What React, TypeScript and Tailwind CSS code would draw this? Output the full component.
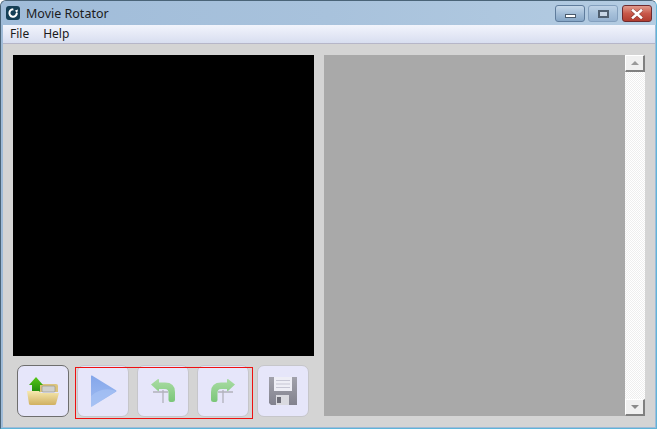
const ToolButton = ({ active, children }: { active?: boolean; children: React.ReactNode }) => (
  <div
    className={`w-[52px] h-[52px] shrink-0 rounded-[7px] bg-[#e6e6fa] flex items-center justify-center border ${
      active ? 'border-[#6e6e6e]' : 'border-[#c6c6ca]'
    }`}
  >
    {children}
  </div>
);

const AppLogo = () => (
  <svg width="14" height="14" viewBox="0 0 14 14">
    <rect width="14" height="14" rx="3" fill="#153f56" />
    <path d="M8.5 3.6 A3.7 3.7 0 1 0 10.8 7" stroke="#ffffff" strokeWidth="2" fill="none" />
    <path d="M7 1.5 L11.5 3 L8 6.5 Z" fill="#153f56" />
    <path d="M9 4.5 L12 3.5 L11 7.5 Z" fill="#ffffff" />
  </svg>
);

const OpenIcon = () => (
  <svg width="34" height="30" viewBox="0 0 34 30">
    <defs>
      <linearGradient id="folder" x1="0" y1="0" x2="0" y2="1">
        <stop offset="0" stopColor="#f6e9b0" />
        <stop offset="1" stopColor="#d0b060" />
      </linearGradient>
      <linearGradient id="arrow" x1="0" y1="0" x2="0" y2="1">
        <stop offset="0" stopColor="#58c818" />
        <stop offset="1" stopColor="#1f8c0c" />
      </linearGradient>
    </defs>
    <path d="M14 16 V9 Q14 8 15 8 H30 Q32 8 32 10 V16 Z" fill="#dcc47c" />
    <rect x="16" y="10" width="13" height="6" rx="1" fill="#d0d0cc" stroke="#8e8e86" strokeWidth="0.6" />
    <path d="M6 9 H3 L10 1 L17 9 H14 V16 H6 Z" fill="url(#arrow)" />
    <path d="M1 15 H13 L15 17 H33 L30 28 Q30 29 28 29 H5 Q3 29 3 28 Z" fill="url(#folder)" />
  </svg>
);

const PlayIcon = () => (
  <svg width="27" height="32" viewBox="0 0 27 32">
    <defs>
      <linearGradient id="play" x1="0" y1="0" x2="0" y2="1">
        <stop offset="0" stopColor="#84a6ea" />
        <stop offset="1" stopColor="#a0bcf2" />
      </linearGradient>
    </defs>
    <path d="M1 1 Q1 0 2 0.6 L26 15.2 Q27 16 26 16.8 L2 31.4 Q1 32 1 31 Z" fill="url(#play)" />
    <path d="M1 21 Q12 11 26.5 16 L2 31.4 Q1 32 1 31 Z" fill="#aac4f5" opacity="0.6" />
  </svg>
);

const TurnIcon = ({ flip }: { flip?: boolean }) => (
  <svg width="26" height="27" viewBox="0 0 26 27" className={flip ? '-scale-x-100' : ''}>
    <defs>
      <linearGradient id="turn" x1="0" y1="0" x2="0" y2="1">
        <stop offset="0" stopColor="#aadcA4" />
        <stop offset="1" stopColor="#7ac678" />
      </linearGradient>
    </defs>
    <path d="M13 12 V25 M3 14 H18" stroke="#b2b2bc" strokeWidth="1.3" fill="none" />
    <path
      d="M1 6.5 L8 1 Q9 0.5 9 2 V4.5 H15 Q25 4.5 25 14 V22 Q25 24 22.5 24 H20.5 Q18.5 24 18.5 22 V15 Q18.5 11 15 11 H9 V12 Q9 13.5 8 13 Z"
      fill="url(#turn)"
    />
  </svg>
);

const SaveIcon = () => (
  <svg width="28" height="28" viewBox="0 0 28 28">
    <defs>
      <linearGradient id="disk" x1="0" y1="0" x2="0" y2="1">
        <stop offset="0" stopColor="#a2a2ac" />
        <stop offset="1" stopColor="#82828e" />
      </linearGradient>
    </defs>
    <path d="M0 0H28V28H2L0 26Z" fill="url(#disk)" />
    <rect x="5" y="0" width="18" height="14" fill="#eeeef6" />
    <path d="M7 3.5H21M7 7H21M7 10.5H21" stroke="#c6c6d4" strokeWidth="1" />
    <rect x="7" y="18" width="13" height="10" fill="#dadae0" />
    <rect x="8" y="20" width="4" height="6" fill="#6e6e78" />
  </svg>
);

export default function App() {
  return (
    <div className="w-[657px] h-[429px] flex flex-col overflow-hidden bg-[#9fbbd8] border border-[#4a6478] border-b-[#5fb4d8] border-r-[#5fb4d8] rounded-t-[6px] font-['Noto_Sans','Open_Sans',sans-serif]">
      {/* title bar */}
      <div className="h-[24px] shrink-0 flex items-start bg-gradient-to-r from-[#a0bcd9] via-[#a8c2dc] to-[#b4cce2]">
        <div className="ml-[5px] mt-[5px]">
          <AppLogo />
        </div>
        <span className="ml-[6px] mt-[5px] text-[12.5px] leading-[16px] text-[#1c1c1c]">Movie Rotator</span>
        <div className="ml-auto mr-[4px] mt-[4px] flex">
          <div className="w-[30px] h-[17px] rounded-[3px] border border-[#5f7c9c] bg-gradient-to-b from-[#c6d8ea] via-[#a4bed8] to-[#86a6c6] flex items-center justify-center">
            <div className="w-[11px] h-[4px] mt-[5px] bg-white border border-[#4a5a6c]" />
          </div>
          <div className="ml-[3px] w-[30px] h-[17px] rounded-[3px] border border-[#84a0be] bg-gradient-to-b from-[#bed2e6] via-[#a6c0da] to-[#96b2d0] flex items-center justify-center">
            <div className="w-[11px] h-[8px] bg-[#c8d6e6] border-2 border-[#4f5f70]" />
          </div>
          <div className="ml-[4px] w-[30px] h-[17px] rounded-[3px] border border-[#6e2a2e] bg-gradient-to-b from-[#e09a8c] via-[#c8584a] to-[#b03c30] flex items-center justify-center">
            <svg width="12" height="10" viewBox="0 0 12 10">
              <path d="M2 1.5 L10 8.5 M10 1.5 L2 8.5" stroke="#4a2020" strokeWidth="3.6" strokeLinecap="square" opacity="0.5" />
              <path d="M2 1.5 L10 8.5 M10 1.5 L2 8.5" stroke="#ffffff" strokeWidth="2.6" strokeLinecap="square" />
            </svg>
          </div>
        </div>
      </div>
      <div className="flex-1 flex flex-col ml-[2px] mr-[1px] mb-[1px] min-h-0 bg-[#d4d4d4]">
        {/* menu */}
        <div className="h-[19px] shrink-0 flex items-center gap-[14px] pl-[7px] text-[12px] text-[#1a1a1a] bg-gradient-to-b from-[#f2f4fc] to-[#d8def0] border-b border-[#b6b6c8]">
          <span>File</span>
          <span>Help</span>
        </div>
        {/* body */}
        <div className="flex-1 flex pl-[10px] pt-[11px] gap-[10px] relative">
          <div className="w-[301px] flex flex-col">
            <div className="h-[301px] bg-black" />
            <div className="flex gap-[8px] pl-[4px] pt-[9px]">
              <ToolButton active><OpenIcon /></ToolButton>
              <ToolButton><PlayIcon /></ToolButton>
              <ToolButton><TurnIcon /></ToolButton>
              <ToolButton><TurnIcon flip /></ToolButton>
              <ToolButton><SaveIcon /></ToolButton>
            </div>
          </div>
          <div className="h-[361px] flex">
            <div className="w-[301px] bg-[#a9a9a9]" />
            <div className="w-[20px] flex flex-col bg-[repeating-conic-gradient(#ffffff_0%_25%,#eeeeee_0%_50%)] bg-[length:2px_2px]">
              <div className="h-[17px] bg-[#f0f0f0] border-t border-l border-t-white border-l-white border-r-2 border-b-2 border-r-[#808080] border-b-[#808080] flex items-center justify-center">
                <div className="w-0 h-0 border-x-[4px] border-x-transparent border-b-[4px] border-b-[#9a9a9a]" />
              </div>
              <div className="mt-auto h-[17px] bg-[#f0f0f0] border-t border-l border-t-white border-l-white border-r-2 border-b-2 border-r-[#808080] border-b-[#808080] flex items-center justify-center">
                <div className="w-0 h-0 border-x-[4px] border-x-transparent border-t-[4px] border-t-[#8a8a8a]" />
              </div>
            </div>
          </div>
          {/* red selection rectangle over the three middle buttons */}
          <div className="absolute left-[72px] top-[323px] w-[178px] h-[52px] border border-[#ee1111] pointer-events-none" />
        </div>
      </div>
    </div>
  );
}
